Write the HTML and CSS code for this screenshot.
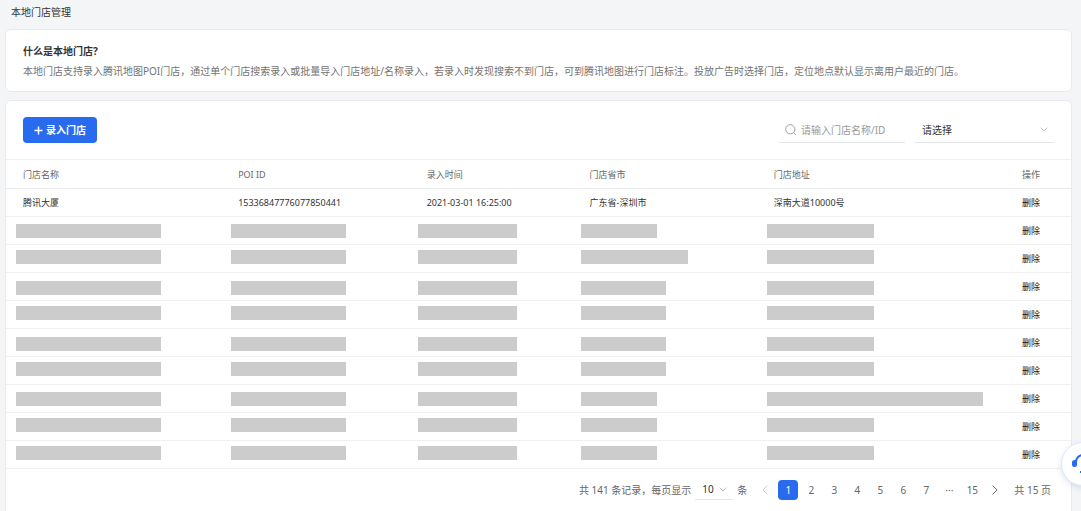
FILE: index.html
```
<!DOCTYPE html>
<html lang="zh-CN">
<head>
<meta charset="utf-8">
<meta name="viewport" content="width=device-width, initial-scale=1">
<title>本地门店管理</title>
<link rel="stylesheet" href="styles.css">
</head>
<body>
<main class="page">
  <h1 class="page-title">本地门店管理</h1>

  <section class="card intro">
    <h2 class="intro-title">什么是本地门店?</h2>
    <p class="intro-text">本地门店支持录入腾讯地图POI门店，通过单个门店搜索录入或批量导入门店地址/名称录入，若录入时发现搜索不到门店，可到腾讯地图进行门店标注。投放广告时选择门店，定位地点默认显示离用户最近的门店。</p>
  </section>

  <section class="card stores">
    <div class="toolbar">
      <button class="add-button" type="button">
        <svg class="plus" viewBox="0 0 9 9" aria-hidden="true"><path d="M4.5 .5v8M.5 4.5h8"/></svg>
        <span>录入门店</span>
      </button>
      <div class="filters">
        <label class="search">
          <svg class="search-icon" viewBox="0 0 12 12" aria-hidden="true"><circle cx="5.3" cy="5.3" r="4.600"/><path d="M8.600 8.600l2.200 2.200"/></svg>
          <input class="search-input" type="text" placeholder="请输入门店名称/ID" aria-label="请输入门店名称/ID">
        </label>
        <div class="select-wrap filter-select">
          <select class="select" aria-label="门店省市"><option>请选择</option></select>
          <svg class="chevron" viewBox="0 0 8 5" aria-hidden="true"><path d="M.7 .7L4 4 7.3 .7"/></svg>
        </div>
      </div>
    </div>

    <table class="table">
      <colgroup><col class="c-name"><col class="c-poi"><col class="c-time"><col class="c-city"><col class="c-addr"><col class="c-op"></colgroup>
      <thead>
        <tr><th>门店名称</th><th>POI ID</th><th>录入时间</th><th>门店省市</th><th>门店地址</th><th>操作</th></tr>
      </thead>
      <tbody>
        <tr><td>腾讯大厦</td><td>15336847776077850441</td><td>2021-03-01 16:25:00</td><td>广东省-深圳市</td><td>深南大道10000号</td><td><button class="delete" type="button">删除</button></td></tr>
        <tr class="masked"><td><i class="bar w-name"></i></td><td><i class="bar w-poi"></i></td><td><i class="bar w-time"></i></td><td><i class="bar w-s"></i></td><td><i class="bar w-l"></i></td><td><button class="delete" type="button">删除</button></td></tr>
        <tr class="masked high"><td><i class="bar w-name"></i></td><td><i class="bar w-poi"></i></td><td><i class="bar w-time"></i></td><td><i class="bar w-l"></i></td><td><i class="bar w-l"></i></td><td><button class="delete" type="button">删除</button></td></tr>
        <tr class="masked low"><td><i class="bar w-name"></i></td><td><i class="bar w-poi"></i></td><td><i class="bar w-time"></i></td><td><i class="bar w-m"></i></td><td><i class="bar w-l"></i></td><td><button class="delete" type="button">删除</button></td></tr>
        <tr class="masked high"><td><i class="bar w-name"></i></td><td><i class="bar w-poi"></i></td><td><i class="bar w-time"></i></td><td><i class="bar w-m"></i></td><td><i class="bar w-l"></i></td><td><button class="delete" type="button">删除</button></td></tr>
        <tr class="masked low"><td><i class="bar w-name"></i></td><td><i class="bar w-poi"></i></td><td><i class="bar w-time"></i></td><td><i class="bar w-m"></i></td><td><i class="bar w-l"></i></td><td><button class="delete" type="button">删除</button></td></tr>
        <tr class="masked high"><td><i class="bar w-name"></i></td><td><i class="bar w-poi"></i></td><td><i class="bar w-time"></i></td><td><i class="bar w-m"></i></td><td><i class="bar w-l"></i></td><td><button class="delete" type="button">删除</button></td></tr>
        <tr class="masked"><td><i class="bar w-name"></i></td><td><i class="bar w-poi"></i></td><td><i class="bar w-time"></i></td><td><i class="bar w-s"></i></td><td><i class="bar w-xl"></i></td><td><button class="delete" type="button">删除</button></td></tr>
        <tr class="masked high"><td><i class="bar w-name"></i></td><td><i class="bar w-poi"></i></td><td><i class="bar w-time"></i></td><td><i class="bar w-s"></i></td><td><i class="bar w-l"></i></td><td><button class="delete" type="button">删除</button></td></tr>
        <tr class="masked high"><td><i class="bar w-name"></i></td><td><i class="bar w-poi"></i></td><td><i class="bar w-time"></i></td><td><i class="bar w-s"></i></td><td><i class="bar w-l"></i></td><td><button class="delete" type="button">删除</button></td></tr>
      </tbody>
    </table>

    <nav class="pagination" aria-label="分页">
      <label class="page-size-label" for="page-size">共 141 条记录，每页显示</label>
      <div class="select-wrap page-size">
        <select class="select" id="page-size"><option>10</option></select>
        <svg class="chevron" viewBox="0 0 8 5" aria-hidden="true"><path d="M.7 .7L4 4 7.3 .7"/></svg>
      </div>
      <span>条</span>
      <div class="pages">
        <button class="page-button prev" type="button" aria-label="上一页" disabled><svg class="arrow" viewBox="0 0 6 10" aria-hidden="true"><path d="M5.3 .7L.9 5l4.4 4.3"/></svg></button>
        <button class="page-button current" type="button" aria-current="page">1</button>
        <button class="page-button" type="button">2</button>
        <button class="page-button" type="button">3</button>
        <button class="page-button" type="button">4</button>
        <button class="page-button" type="button">5</button>
        <button class="page-button" type="button">6</button>
        <button class="page-button" type="button">7</button>
        <span class="page-button">···</span>
        <button class="page-button" type="button">15</button>
        <button class="page-button next" type="button" aria-label="下一页"><svg class="arrow" viewBox="0 0 6 10" aria-hidden="true"><path d="M.7 .7L5.1 5 .7 9.3"/></svg></button>
      </div>
      <span class="total">共 15 页</span>
    </nav>
  </section>
</main>

<button class="support" type="button" aria-label="在线客服">
  <svg class="headset" viewBox="0 0 22 22" aria-hidden="true"><path class="band" d="M4 11V9a7 7 0 0 1 14 0V11M18 14c0 3-2 5-5 5H8"/><rect x="0" y="7" width="5" height="7" rx="2.500"/><rect x="17" y="7" width="5" height="7" rx="2.500"/></svg>
</button>
</body>
</html>
```
FILE: styles.css
```
* { box-sizing: border-box; }

body {
  margin: 0;
  background: #f4f5f7;
  color: #333;
  font-family: "Noto Sans", "Noto Sans CJK SC", sans-serif;
  font-size: 10px;
  line-height: 20px;
}

button, input, select {
  margin: 0;
  padding: 0;
  border: 0;
  background: none;
  color: inherit;
  font: inherit;
}

button { cursor: pointer; }
svg { display: block; fill: none; stroke: currentColor; }

.page {
  display: flex;
  flex-direction: column;
  min-height: 100vh;
  padding: 2px 9px 0 5px;
}

.page-title {
  margin: 0 0 7px;
  padding-left: 6px;
  font-size: 10px;
  font-weight: 400;
}

.card {
  background: #fff;
  border: 1px solid #e9eaed;
  border-radius: 6px;
}

.intro { padding: 11px 17px 10px; margin-bottom: 8px; }
.intro-title { margin: 0; font-size: 10px; font-weight: 700; }
.intro-text { margin: 0; color: #737373; }

.stores {
  flex: 1;
  border-bottom: 0;
  border-radius: 6px 6px 0 0;
}

.toolbar {
  display: flex;
  justify-content: space-between;
  align-items: center;
  padding: 16px 17px;
  border-bottom: 1px solid #f0f0f1;
}

.add-button {
  display: flex;
  align-items: center;
  gap: 3px;
  height: 26px;
  padding: 0 11px;
  border-radius: 4px;
  background: #296bef;
  color: #fff;
  font-weight: 700;
}

.plus { width: 9px; height: 9px; stroke-width: 1.5; }
.filters { display: flex; gap: 10px; }

.search {
  display: flex;
  align-items: center;
  gap: 4px;
  width: 126px;
  height: 25px;
  padding-left: 6px;
  border-bottom: 1px solid #e5e6e9;
}

.search-icon { flex: none; width: 12px; height: 12px; color: #a0a0a0; }
.search-input { flex: 1; min-width: 0; outline: 0; }
.search-input::placeholder { color: #999; opacity: 1; }

.select-wrap {
  display: grid;
  align-items: center;
  border-bottom: 1px solid #e5e6e9;
}

.select-wrap > * { grid-area: 1 / 1; }
.select { appearance: none; width: 100%; height: 20px; padding: 0 7px; outline: 0; }
.chevron { justify-self: end; width: 8px; height: 5px; margin-right: 6px; color: #b9bcc2; pointer-events: none; }
.filter-select { width: 139px; height: 25px; }

.table {
  width: 100%;
  border-collapse: separate;
  border-spacing: 0;
  table-layout: fixed;
  font-size: 9px;
}

.c-name { width: 20.2%; }
.c-poi { width: 17.7%; }
.c-time { width: 15.3%; }
.c-city { width: 17.3%; }
.c-addr { width: 23.3%; }

.table th,
.table td {
  height: 28px;
  padding: 0 0 0 17px;
  border-bottom: 1px solid #f0f0f1;
  text-align: left;
  vertical-align: middle;
}

.table th { height: 29px; padding-top: 2px; color: #666; font-weight: 400; border-color: #e9eaec; }
.masked td { padding-left: 10px; }
.masked td:nth-child(3),
.masked td:nth-child(4) { padding-left: 8px; }
.masked td:last-child { padding-left: 17px; }
.bar { display: block; height: 14px; background: #ccc; }
.high .bar { margin-bottom: 3px; }
.low .bar { margin-top: 3px; }
.w-name { width: 145px; }
.w-poi { width: 115px; }
.w-time { width: 99px; }
.w-s { width: 76px; }
.w-m { width: 85px; }
.w-l { width: 107px; }
.w-xl { width: 216px; }
.delete { display: block; color: #111; }

.pagination {
  display: flex;
  justify-content: flex-end;
  align-items: center;
  padding: 10px 20px 10px 17px;
  color: #666;
}

.page-size { width: 38px; height: 21px; margin: 0 4px; color: #333; }
.pages { display: flex; gap: 3px; margin: 0 9px 0 8px; }

.page-button {
  display: flex;
  justify-content: center;
  align-items: center;
  width: 20px;
  height: 20px;
  border-radius: 4px;
}

.current { background: #296bef; color: #fff; }
.prev { color: #ccc; }
.arrow { width: 6px; height: 10px; }

.support {
  position: fixed;
  right: -24px;
  bottom: 25px;
  display: flex;
  justify-content: center;
  align-items: center;
  width: 44px;
  height: 44px;
  border: 1px solid #dde8fc;
  border-radius: 50%;
  background: #fff;
  box-shadow: 0 2px 6px rgba(40, 80, 150, .16);
  color: #296bef;
}

.headset { width: 22px; height: 22px; }
.headset rect { fill: currentColor; stroke: none; }
.band { stroke-width: 2; }
```
